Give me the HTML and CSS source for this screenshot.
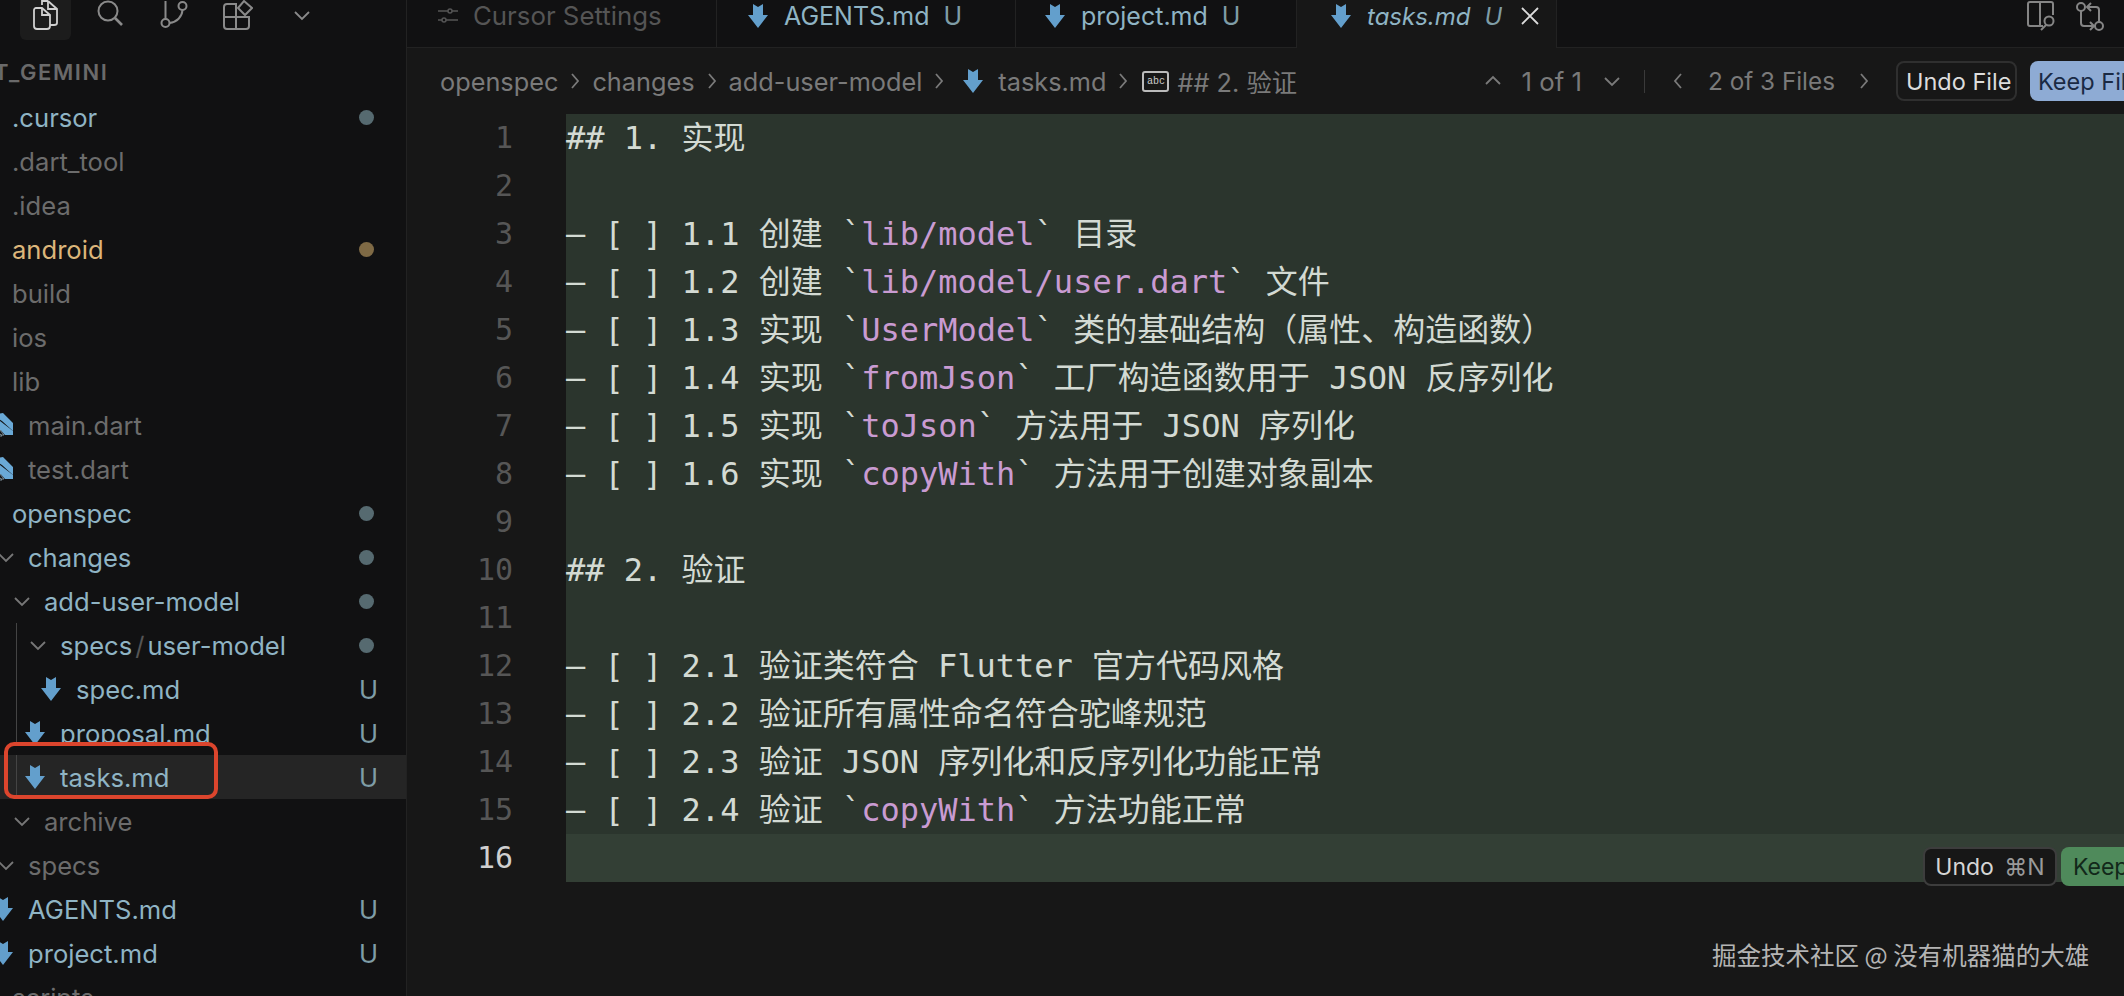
FILE: index.html
```html
<!DOCTYPE html>
<html lang="en">

<head>
    <meta charset="UTF-8">
    <title>tasks.md - Cursor</title>
    <link rel="stylesheet" href="styles.css">
</head>

<body>
    <svg class="defs" width="0" height="0">
        <symbol id="md" viewBox="0 0 20 24">
            <path d="M5 0 L10 3 L15 0 V11 H20 L10 24 L0 11 H5 Z" fill="#639fcc" />
        </symbol>
        <symbol id="dart" viewBox="0 0 24 24">
            <path d="M2 2 L13 0 L23 10 V18 L12 8 Z" fill="#6aa9d6" />
            <path d="M0 5 L14 22 H5 L0 17 Z" fill="#111112" stroke="#7a8c96" stroke-width="1" />
            <path d="M2 2 L23 18 V22 H15 L0 5 Z" fill="#6aa9d6" />
            <path d="M0 10 L12 23 H3 L0 20 Z" fill="#111112" stroke="#7a8c96" stroke-width="1" />
        </symbol>
        <symbol id="chev" viewBox="0 0 20 20">
            <path d="M3 7 L10 14 L17 7" fill="none" stroke="currentColor" stroke-width="1.8" />
        </symbol>
        <symbol id="crumb" viewBox="0 0 12 20">
            <path d="M3 3 L9 10 L3 17" fill="none" stroke="currentColor" stroke-width="1.8" />
        </symbol>
    </svg>

    <div class="app">
        <aside class="sidebar">
            <div class="activity">
                <div class="tile tile-on">
                    <svg width="26" height="30" viewBox="0 0 26 30" fill="none" stroke="#d0d0d0" stroke-width="1.8">
                        <path d="M15 1 H9 V5 M15 1 L24 9 V23 C24 24 23 25 21 25 H17" />
                        <path d="M15 1 V9 H24" />
                        <path d="M3 8 H9 L17 15 V26 C17 28 16 29 14 29 H4 C2 29 1 28 1 26 V10 C1 9 2 8 3 8 Z" />
                        <path d="M9 8 V15 H17" />
                    </svg>
                </div>
                <div class="tile">
                    <svg width="26" height="26" viewBox="0 0 26 26" fill="none" stroke="#8a8a8a" stroke-width="2">
                        <circle cx="11" cy="11" r="9.5" />
                        <path d="M18 18 L25 25" stroke-width="2.6" />
                    </svg>
                </div>
                <div class="tile">
                    <svg width="28" height="28" viewBox="0 0 28 28" fill="none" stroke="#8a8a8a" stroke-width="2">
                        <circle cx="5.5" cy="23" r="4" />
                        <circle cx="22.5" cy="6" r="4" />
                        <path d="M5.5 19 V1" />
                        <path d="M9.5 23 C17 22 22 17 22.5 10" />
                    </svg>
                </div>
                <div class="tile">
                    <svg width="30" height="30" viewBox="0 0 30 30" fill="none" stroke="#8a8a8a" stroke-width="2">
                        <path d="M13 4 H4 C2 4 1 5 1 7 V26 C1 28 2 29 4 29 H23 C25 29 26 28 26 26 V17 H13 V4 Z" />
                        <path d="M13 17 V29 M1 17 H13" />
                        <path d="M21 1 L29 8 L22 15 L15 8 Z" />
                    </svg>
                </div>
                <div class="tile tile-chev">
                    <svg width="20" height="20" class="ico-gray"><use href="#chev" /></svg>
                </div>
            </div>

            <div class="project">T_GEMINI</div>

            <div class="tree">
                <div class="row lvl1 c-mod"><span class="twist"></span><span class="name">.cursor</span><i class="dot"></i></div>
                <div class="row lvl1 c-dim"><span class="twist"></span><span class="name">.dart_tool</span></div>
                <div class="row lvl1 c-dim"><span class="twist"></span><span class="name">.idea</span></div>
                <div class="row lvl1 c-warn"><span class="twist"></span><span class="name">android</span><i class="dot dot-warn"></i></div>
                <div class="row lvl1 c-dim"><span class="twist"></span><span class="name">build</span></div>
                <div class="row lvl1 c-dim"><span class="twist"></span><span class="name">ios</span></div>
                <div class="row lvl1 c-dim"><span class="twist"></span><span class="name">lib</span></div>
                <div class="row lvl2 c-dim"><span class="twist"><svg class="fileico dart"><use href="#dart" /></svg></span><span class="name">main.dart</span></div>
                <div class="row lvl2 c-dim"><span class="twist"><svg class="fileico dart"><use href="#dart" /></svg></span><span class="name">test.dart</span></div>
                <div class="row lvl1 c-mod"><span class="twist"></span><span class="name">openspec</span><i class="dot"></i></div>
                <div class="row lvl2 c-mod"><span class="twist"><svg class="chev"><use href="#chev" /></svg></span><span class="name">changes</span><i class="dot"></i></div>
                <div class="row lvl3 c-mod"><span class="twist"><svg class="chev"><use href="#chev" /></svg></span><span class="name">add-user-model</span><i class="dot"></i></div>
                <div class="guide">
                    <div class="row lvl4 c-mod"><span class="twist"><svg class="chev"><use href="#chev" /></svg></span><span class="name">specs<span class="slash">/</span>user-model</span><i class="dot"></i></div>
                    <div class="row lvl5 c-mod"><span class="twist"><svg class="fileico"><use href="#md" /></svg></span><span class="name">spec.md</span><span class="badge">U</span></div>
                    <div class="row lvl4 c-mod"><span class="twist"><svg class="fileico"><use href="#md" /></svg></span><span class="name">proposal.md</span><span class="badge">U</span></div>
                    <div class="row lvl4 c-mod row-on"><span class="twist"><svg class="fileico"><use href="#md" /></svg></span><span class="name">tasks.md</span><span class="badge">U</span><div class="redbox"></div></div>
                </div>
                <div class="row lvl3 c-dim"><span class="twist"><svg class="chev"><use href="#chev" /></svg></span><span class="name">archive</span></div>
                <div class="row lvl2 c-dim"><span class="twist"><svg class="chev"><use href="#chev" /></svg></span><span class="name">specs</span></div>
                <div class="row lvl2 c-mod"><span class="twist"><svg class="fileico"><use href="#md" /></svg></span><span class="name">AGENTS.md</span><span class="badge">U</span></div>
                <div class="row lvl2 c-mod"><span class="twist"><svg class="fileico"><use href="#md" /></svg></span><span class="name">project.md</span><span class="badge">U</span></div>
                <div class="row lvl1 c-dim"><span class="twist"></span><span class="name">scripts</span></div>
            </div>
        </aside>

        <main class="main">
            <div class="tabs">
                <div class="tab tab-settings">
                    <svg width="22" height="20" viewBox="0 0 22 20" fill="none" stroke="#555" stroke-width="1.5">
                        <path d="M1 5 H11 M15 5 H21 M1 14 H5 M9 14 H21" />
                        <circle cx="13" cy="5" r="2" />
                        <circle cx="7" cy="14" r="2" />
                    </svg>
                    <span class="tab-name">Cursor Settings</span>
                </div>
                <div class="tab tab-agents">
                    <svg class="tabico"><use href="#md" /></svg>
                    <span class="tab-name">AGENTS.md</span>
                    <span class="tab-u">U</span>
                </div>
                <div class="tab tab-project">
                    <svg class="tabico"><use href="#md" /></svg>
                    <span class="tab-name">project.md</span>
                    <span class="tab-u">U</span>
                </div>
                <div class="tab tab-on">
                    <svg class="tabico"><use href="#md" /></svg>
                    <span class="tab-name">tasks.md</span>
                    <span class="tab-u">U</span>
                    <svg class="tab-x" width="18" height="18" viewBox="0 0 18 18" stroke="#dcdcdc" stroke-width="1.8">
                        <path d="M1 1 L17 17 M17 1 L1 17" />
                    </svg>
                </div>
                <div class="tabs-rest">
                    <svg width="28" height="30" viewBox="0 0 28 30" fill="none" stroke="#858585" stroke-width="2">
                        <path d="M16 25 H3 C2 25 1 24 1 23 V3 C1 2 2 1 3 1 H24 C25 1 26 2 26 3 V14" />
                        <path d="M13 1 V25" />
                        <circle cx="22" cy="20" r="4.5" />
                        <path d="M19 24 L14 29" />
                    </svg>
                    <svg width="28" height="30" viewBox="0 0 28 30" fill="none" stroke="#858585" stroke-width="2">
                        <circle cx="5" cy="6" r="4" />
                        <circle cx="23" cy="25" r="4" />
                        <path d="M5 10 V22 C5 24 6 25 8 25 H18" />
                        <path d="M14 21 L18 25 L14 29" />
                        <path d="M23 21 V9 C23 7 22 6 20 6 H11" />
                        <path d="M15 2 L11 6 L15 10" />
                    </svg>
                </div>
            </div>

            <div class="crumbs">
                <span class="crumb crumb-first">openspec</span>
                <svg class="crumb-sep"><use href="#crumb" /></svg>
                <span class="crumb">changes</span>
                <svg class="crumb-sep"><use href="#crumb" /></svg>
                <span class="crumb">add-user-model</span>
                <svg class="crumb-sep"><use href="#crumb" /></svg>
                <svg class="tabico crumb-ico"><use href="#md" /></svg>
                <span class="crumb">tasks.md</span>
                <svg class="crumb-sep"><use href="#crumb" /></svg>
                <span class="abc">abc</span>
                <span class="crumb">## 2. 验证</span>

                <div class="review">
                    <svg class="nav-up"><use href="#chev" /></svg>
                    <span class="count count-big">1 of 1</span>
                    <svg class="nav-down"><use href="#chev" /></svg>
                    <span class="vsep"></span>
                    <svg class="crumb-sep flip"><use href="#crumb" /></svg>
                    <span class="count">2 of 3 Files</span>
                    <svg class="crumb-sep next"><use href="#crumb" /></svg>
                    <button class="btn btn-undo">Undo File</button>
                    <button class="btn btn-keep">Keep File</button>
                </div>
            </div>

            <div class="editor">
                <div class="line"><span class="num">1</span><span class="txt">## 1. 实现</span></div>
                <div class="line"><span class="num">2</span><span class="txt"></span></div>
                <div class="line"><span class="num">3</span><span class="txt">– [ ] 1.1 创建 `<b>lib/model</b>` 目录</span></div>
                <div class="line"><span class="num">4</span><span class="txt">– [ ] 1.2 创建 `<b>lib/model/user.dart</b>` 文件</span></div>
                <div class="line"><span class="num">5</span><span class="txt">– [ ] 1.3 实现 `<b>UserModel</b>` 类的基础结构（属性、构造函数）</span></div>
                <div class="line"><span class="num">6</span><span class="txt">– [ ] 1.4 实现 `<b>fromJson</b>` 工厂构造函数用于 JSON 反序列化</span></div>
                <div class="line"><span class="num">7</span><span class="txt">– [ ] 1.5 实现 `<b>toJson</b>` 方法用于 JSON 序列化</span></div>
                <div class="line"><span class="num">8</span><span class="txt">– [ ] 1.6 实现 `<b>copyWith</b>` 方法用于创建对象副本</span></div>
                <div class="line"><span class="num">9</span><span class="txt"></span></div>
                <div class="line"><span class="num">10</span><span class="txt">## 2. 验证</span></div>
                <div class="line"><span class="num">11</span><span class="txt"></span></div>
                <div class="line"><span class="num">12</span><span class="txt">– [ ] 2.1 验证类符合 Flutter 官方代码风格</span></div>
                <div class="line"><span class="num">13</span><span class="txt">– [ ] 2.2 验证所有属性命名符合驼峰规范</span></div>
                <div class="line"><span class="num">14</span><span class="txt">– [ ] 2.3 验证 JSON 序列化和反序列化功能正常</span></div>
                <div class="line"><span class="num">15</span><span class="txt">– [ ] 2.4 验证 `<b>copyWith</b>` 方法功能正常</span></div>
                <div class="line line-cur"><span class="num">16</span><span class="txt"></span></div>

                <div class="inline-actions">
                    <button class="btn-inline btn-inline-undo">Undo <span class="kbd">⌘N</span></button>
                    <button class="btn-inline btn-inline-keep">Keep</button>
                </div>
            </div>
        </main>
    </div>

    <div class="watermark">掘金技术社区 @ 没有机器猫的大雄</div>
</body>

</html>
```

FILE: styles.css
```css
* {
    box-sizing: border-box;
}

body {
    margin: 0;
    height: 996px;
    overflow: hidden;
    background-color: #171717;
    font-family: Inter, "Noto Sans CJK SC", sans-serif;
    font-size: 24px;
    color: #777;
    position: relative;
}

.defs {
    position: absolute;
}

.app {
    display: flex;
    height: 996px;
}

/* Sidebar */
.sidebar {
    width: 407px;
    flex-shrink: 0;
    background-color: #111112;
    border-right: 1px solid #222;
    overflow: hidden;
}

.activity {
    display: flex;
    gap: 13px;
    height: 48px;
    padding-left: 20px;
}

.tile {
    width: 51px;
    height: 40px;
    display: flex;
    justify-content: center;
    align-items: flex-start;
}

.tile-on {
    background-color: #1c1c1c;
    border-radius: 0 0 6px 6px;
}

.tile-chev {
    padding-top: 5px;
}

.ico-gray {
    color: #8a8a8a;
}

.project {
    height: 47px;
    line-height: 48px;
    margin-left: -6px;
    font-size: 22px;
    font-weight: 600;
    letter-spacing: 1.6px;
    color: #6a6a6a;
}

.tree {
    margin-left: -33px;
}

.row {
    display: flex;
    align-items: center;
    height: 44px;
    padding-right: 32px;
    font-size: 25.6px;
    position: relative;
}

.lvl1 {
    padding-left: 13px;
}

.lvl2 {
    padding-left: 29px;
}

.lvl3 {
    padding-left: 45px;
}

.lvl4 {
    padding-left: 61px;
}

.lvl5 {
    padding-left: 77px;
}

.twist {
    width: 32px;
    height: 44px;
    flex-shrink: 0;
    display: flex;
    align-items: center;
    color: #777;
}

.name {
    white-space: nowrap;
}

.c-mod {
    color: #8fb4c4;
}

.c-dim {
    color: #6c6c6c;
}

.c-warn {
    color: #dcb67a;
}

.slash {
    color: #555;
    margin: 0 3px;
}

.chev {
    width: 20px;
    height: 20px;
}

.fileico {
    width: 20px;
    height: 24px;
    margin-left: -3px;
}

.fileico.dart {
    width: 24px;
    margin-left: -6px;
}

.dot {
    width: 15px;
    height: 15px;
    border-radius: 50%;
    background-color: #566a70;
    margin-left: auto;
}

.dot-warn {
    background-color: #7f6a45;
}

.badge {
    margin-left: auto;
    color: #7f9da6;
    width: 15px;
    text-align: center;
}

.row-on {
    background-color: #252525;
}

.guide {
    position: relative;
}

.guide::before {
    content: "";
    position: absolute;
    left: 49px;
    top: 0;
    bottom: 0;
    width: 1px;
    background-color: #444;
    z-index: 1;
}

.redbox {
    position: absolute;
    left: 37px;
    top: -13px;
    width: 214px;
    height: 57px;
    border: 4px solid #dc452d;
    border-radius: 10px;
    background: linear-gradient(#111112 9px, transparent 9px);
    z-index: 2;
}

/* Tabs */
.main {
    flex: 1;
    min-width: 0;
}

.tabs {
    display: flex;
    height: 48px;
    background-color: #111112;
}

.tab {
    height: 48px;
    padding-bottom: 16px;
    display: flex;
    align-items: center;
    border-right: 1px solid #222;
    border-bottom: 1px solid #222;
    font-size: 25px;
    color: #8fb4c4;
    white-space: nowrap;
}

.tab-settings {
    width: 310px;
    padding-left: 30px;
    color: #555;
}

.tab-settings .tab-name {
    margin-left: 14px;
    font-size: 25.8px;
}

.tab-agents {
    width: 299px;
    padding-left: 31px;
}

.tab-project {
    width: 281px;
    padding-left: 29px;
}

.tab-on {
    width: 260px;
    padding-left: 34px;
    background-color: #171717;
    border-bottom: none;
    font-size: 24px;
}

.tab-on .tab-name,
.tab-on .tab-u {
    font-style: italic;
}

.tabico {
    width: 20px;
    height: 24px;
    margin-right: 16px;
}

.tab-u {
    margin-left: 14px;
    color: #7f9da6;
}

.tab-x {
    margin-left: 19px;
}

.tabs-rest {
    flex: 1;
    height: 48px;
    border-bottom: 1px solid #222;
    display: flex;
    justify-content: flex-end;
    gap: 21px;
    padding-right: 20px;
    padding-top: 1px;
}

/* Breadcrumbs */
.crumbs {
    height: 66px;
    display: flex;
    align-items: center;
    padding-left: 33px;
    font-size: 25.3px;
    color: #7a7a7a;
}

.crumb {
    white-space: nowrap;
}

.crumb-sep {
    width: 12px;
    height: 20px;
    margin: 0 11px;
    flex-shrink: 0;
    color: #7a7a7a;
}

.crumb-ico {
    margin-right: 15px;
    margin-left: 7px;
}

.abc {
    width: 27px;
    height: 21px;
    border: 2px solid #bbb;
    border-radius: 3px;
    margin-left: 2px;
    margin-right: 8px;
    font-family: "Liberation Mono", monospace;
    font-size: 10px;
    line-height: 17px;
    text-align: center;
    color: #ccc;
}

.review {
    margin-left: auto;
    display: flex;
    align-items: center;
    flex-shrink: 0;
    margin-right: -60px;
}

.nav-up,
.nav-down {
    width: 20px;
    height: 20px;
    color: #7a7a7a;
}

.nav-up {
    transform: scaleY(-1);
    margin-right: 18px;
}

.nav-down {
    margin-left: 20px;
}

.count {
    white-space: nowrap;
    font-size: 24.3px;
}

.count-big {
    font-size: 25.8px;
}

.vsep {
    width: 1px;
    height: 23px;
    background-color: #3a3a3a;
    margin: 0 27px 0 22px;
}

.crumb-sep.flip {
    transform: scaleX(-1);
    margin: 0 24px 0 0;
}

.crumb-sep.next {
    margin: 0 6px 0 23px;
}

.btn {
    height: 40px;
    padding: 0 8px;
    border-radius: 8px;
    font-family: inherit;
    font-size: 23.5px;
    white-space: nowrap;
}

.btn-undo {
    width: 121px;
    margin-left: 20px;
    background-color: #171717;
    border: 2px solid #2f2f2f;
    color: #dcdcdc;
}

.btn-keep {
    width: 154px;
    margin-left: 13px;
    text-align: left;
    background-color: #8eabd4;
    border: none;
    color: #1a2a44;
}

/* Editor */
.editor {
    position: relative;
    font-family: "DejaVu Sans Mono", "Noto Sans CJK SC", monospace;
}

.line {
    display: flex;
    height: 48px;
    line-height: 48px;
}

.num {
    width: 106px;
    margin-right: 53px;
    text-align: right;
    font-size: 30px;
    color: #565656;
    flex-shrink: 0;
}

.txt {
    flex: 1;
    background-color: #2b352d;
    font-size: 32px;
    color: #d3dad3;
    white-space: pre;
}

.txt b {
    font-weight: normal;
    color: #c99bd2;
}

.line-cur .num {
    color: #cfcfcf;
}

.line-cur .txt {
    background-color: #333f35;
}

.inline-actions {
    position: absolute;
    left: 1516px;
    bottom: -4px;
    display: flex;
    gap: 4px;
}

.btn-inline {
    height: 39px;
    border-radius: 8px;
    font-family: Inter, sans-serif;
    font-size: 23px;
    white-space: nowrap;
}

.btn-inline-undo {
    width: 134px;
    background-color: #171717;
    border: 2px solid #3d3d3d;
    color: #d5d5d5;
}

.kbd {
    color: #9a9a9a;
    margin-left: 4px;
}

.btn-inline-keep {
    width: 110px;
    text-align: left;
    padding-left: 12px;
    background-color: #4f8a5b;
    border: none;
    color: #12281a;
}

.watermark {
    position: absolute;
    left: 1712px;
    top: 938px;
    font-family: "Noto Sans CJK SC", sans-serif;
    font-size: 24.5px;
    line-height: 34px;
    color: #b4b4b4;
    white-space: nowrap;
}
```
